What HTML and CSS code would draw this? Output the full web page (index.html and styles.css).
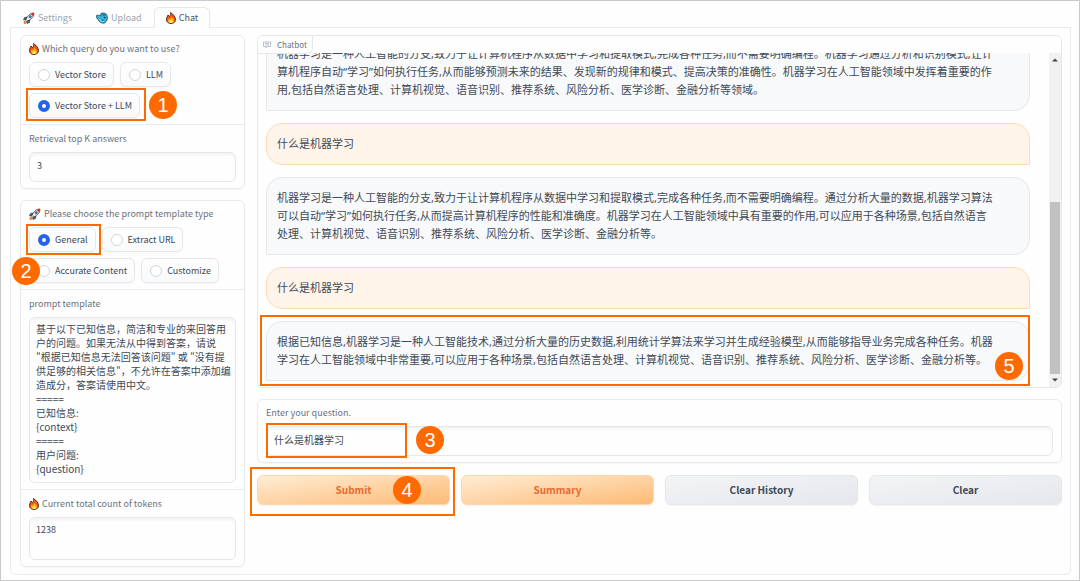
FILE: index.html
```html
<!DOCTYPE html>
<html lang="zh-CN">
<head>
<meta charset="utf-8">
<meta name="viewport" content="width=device-width, initial-scale=1">
<title>Chat</title>
<link rel="stylesheet" href="styles.css">
</head>
<body>
<svg class="defs" aria-hidden="true">
  <symbol id="rocket" viewBox="0 0 24 24">
    <path d="M8 10 3 11 1 16l5-1zM14 16l-1 5-5 2 1-5z" fill="#1c6f9e" stroke="#222" stroke-width="1"/>
    <path d="M5 17c-3 1-3 4-3 6 3 0 5-1 6-3z" fill="#f6a21b" stroke="#a33a12" stroke-width="1"/>
    <path d="M22 2c-7 0-12 4-16 13l3 3C18 14 22 9 22 2z" fill="#e8edf0" stroke="#333" stroke-width="1.4"/>
    <path d="M22 2c-3 0-5 .5-7 1.500l5.500 5.500C21.500 7 22 5 22 2z" fill="#d9292c"/>
    <circle cx="14.500" cy="9.500" r="2.300" fill="#2b8fc0" stroke="#333" stroke-width="1"/>
  </symbol>
  <symbol id="fish" viewBox="0 0 24 24">
    <path d="M1 7c3-1 6-1 8 1l1-5c5-2 10-1 12 4 2 6 0 12-5 15-5 1-10-1-12-6-3-2-4-5-4-9z" fill="#35b5dc" stroke="#17384a" stroke-width="1.500"/>
    <path d="M12 4c3-1 6 0 8 3l-6 2zM11 14c3 0 5 1 5 4-3 1-5-1-5-4z" fill="#1884ad"/>
    <path d="M6 14c2 4 6 6 10 5" stroke="#a5e6f5" stroke-width="2" fill="none"/>
    <circle cx="17.500" cy="11" r="1.600" fill="#14242d"/>
  </symbol>
  <symbol id="fire" viewBox="0 0 20 24">
    <path d="M9 1c6 4 10 9 10 14 0 5-4 8-9 8s-9-3-9-8c0-4 2-6 3-9l3 3c2-2 3-5 2-8z" fill="#ef5b17" stroke="#4a2010" stroke-width="1.800"/>
    <path d="M10 10c3 2 6 5 6 8 0 3-3 4-6 4s-6-1-6-4c0-2 1-4 3-5l1 2c1-1 2-3 2-5z" fill="#fcb51f"/>
    <path d="M10 16c2 1 3 2 3 4s-1 2-3 2-3-1-3-2 1-3 3-4z" fill="#fff05a"/>
  </symbol>
</svg>
<div class="app">
  <nav class="tabs" role="tablist">
    <button class="tab" role="tab"><svg class="emoji"><use href="#rocket"/></svg>Settings</button>
    <button class="tab" role="tab"><svg class="emoji"><use href="#fish"/></svg>Upload</button>
    <button class="tab tab-active" role="tab" aria-selected="true"><svg class="emoji slim"><use href="#fire"/></svg>Chat</button>
  </nav>
  <main class="panel">
    <div class="side">
      <section class="card">
        <div class="block" role="radiogroup" aria-labelledby="query-label">
          <div class="label" id="query-label"><svg class="emoji slim"><use href="#fire"/></svg>Which query do you want to use?</div>
          <div class="pills">
            <label class="pill"><input type="radio" name="query">Vector Store</label>
            <label class="pill"><input type="radio" name="query">LLM</label>
            <label class="pill"><input type="radio" name="query" checked>Vector Store + LLM<span class="mark mark-query"></span><span class="step step-1">1</span></label>
          </div>
        </div>
        <div class="block">
          <label class="label" for="topk">Retrieval top K answers</label>
          <input class="field numeric" id="topk" type="text" value="3">
        </div>
      </section>
      <section class="card">
        <div class="block" role="radiogroup" aria-labelledby="template-label">
          <div class="label" id="template-label"><svg class="emoji"><use href="#rocket"/></svg>Please choose the prompt template type</div>
          <div class="pills">
            <label class="pill"><input type="radio" name="template" checked>General<span class="mark mark-template"></span></label>
            <label class="pill"><input type="radio" name="template">Extract URL</label>
            <label class="pill"><input type="radio" name="template">Accurate Content<span class="step step-2">2</span></label>
            <label class="pill"><input type="radio" name="template">Customize</label>
          </div>
        </div>
        <div class="block">
          <label class="label" for="prompt">prompt template</label>
          <textarea class="field area" id="prompt" rows="11">基于以下已知信息，简洁和专业的来回答用
户的问题。如果无法从中得到答案，请说
"根据已知信息无法回答该问题" 或 "没有提
供足够的相关信息"，不允许在答案中添加编
造成分，答案请使用中文。
=====
已知信息:
{context}
=====
用户问题:
{question}</textarea>
        </div>
        <div class="block">
          <label class="label" for="tokens"><svg class="emoji slim"><use href="#fire"/></svg>Current total count of tokens</label>
          <textarea class="field area numeric tokens" id="tokens" rows="2">1238</textarea>
        </div>
      </section>
    </div>
    <div class="content">
      <section class="chatbot">
        <div class="chat-label"><svg class="chat-icon" viewBox="0 0 16 16"><path d="M1 2h14v9H9l-3 3v-3H1zM4 5h8M4 8h8" fill="none" stroke="currentColor" stroke-width="1.300"/></svg>Chatbot</div>
        <div class="chat-body">
          <div class="messages">
            <div class="message bot">机器学习是一种人工智能的分支,致力于让计算机程序从数据中学习和提取模式,完成各种任务,而不需要明确编程。机器学习通过分析和识别模式,让计<br>算机程序自动“学习”如何执行任务,从而能够预测未来的结果、发现新的规律和模式、提高决策的准确性。机器学习在人工智能领域中发挥着重要的作<br>用,包括自然语言处理、计算机视觉、语音识别、推荐系统、风险分析、医学诊断、金融分析等领域。</div>
            <div class="message user">什么是机器学习</div>
            <div class="message bot">机器学习是一种人工智能的分支,致力于让计算机程序从数据中学习和提取模式,完成各种任务,而不需要明确编程。通过分析大量的数据,机器学习算法<br>可以自动“学习”如何执行任务,从而提高计算机程序的性能和准确度。机器学习在人工智能领域中具有重要的作用,可以应用于各种场景,包括自然语言<br>处理、计算机视觉、语音识别、推荐系统、风险分析、医学诊断、金融分析等。</div>
            <div class="message user">什么是机器学习</div>
            <div class="message bot">根据已知信息,机器学习是一种人工智能技术,通过分析大量的历史数据,利用统计学算法来学习并生成经验模型,从而能够指导业务完成各种任务。机器<br>学习在人工智能领域中非常重要,可以应用于各种场景,包括自然语言处理、计算机视觉、语音识别、推荐系统、风险分析、医学诊断、金融分析等。<span class="mark mark-answer"></span><span class="step step-5">5</span></div>
          </div>
          <div class="scrollbar" aria-hidden="true">
            <svg class="arrow" viewBox="0 0 12 12"><path d="M3 8h6L6 5z" fill="#444"/></svg>
            <div class="track"><div class="thumb"></div></div>
            <svg class="arrow" viewBox="0 0 12 12"><path d="M3 4h6L6 7z" fill="#444"/></svg>
          </div>
        </div>
      </section>
      <section class="card">
        <div class="block">
          <label class="label" for="question">Enter your question.</label>
          <div class="anchor">
            <input class="field" id="question" type="text" value="什么是机器学习">
            <span class="mark mark-question"></span><span class="step step-3">3</span>
          </div>
        </div>
      </section>
      <div class="actions">
        <div class="anchor">
          <button class="btn primary">Submit</button>
          <span class="mark mark-submit"></span><span class="step step-4">4</span>
        </div>
        <button class="btn primary">Summary</button>
        <button class="btn">Clear History</button>
        <button class="btn">Clear</button>
      </div>
    </div>
  </main>
</div>
</body>
</html>
```
FILE: styles.css
```css
* { box-sizing: border-box; }
body {
  margin: 0;
  background: #fefefe;
  color: #414956;
  font-family: "Noto Sans CJK SC", "Noto Sans", sans-serif;
  font-size: 10px;
  line-height: 14px;
}
button, input, textarea { font: inherit; color: inherit; }
.defs { position: absolute; width: 0; height: 0; }
.app {
  display: flex;
  flex-direction: column;
  min-height: 100vh;
  padding: 6px 8px 5px 9px;
  border: 1px solid #c9c9c9;
}
.tabs { display: flex; height: 20px; padding-left: 1px; }
.tab {
  display: flex;
  align-items: center;
  height: 21px;
  padding: 0 11px;
  border: 1px solid transparent;
  border-bottom: 0;
  background: none;
  color: #9ca3af;
  font-size: 9px;
}
.tab-active {
  border-color: #e5e7eb;
  border-radius: 6px 6px 0 0;
  background: #fefefe;
  color: #4b5563;
  z-index: 1;
}
.emoji { flex: none; width: 12px; height: 12px; margin-right: 3px; }
.emoji.slim { width: 10px; }
.panel {
  flex: 1;
  display: grid;
  grid-template-columns: 45fr 161fr;
  gap: 12px;
  padding: 7px 8px 7px 9px;
  border: 1px solid #e9eaec;
  border-radius: 0 0 6px 6px;
}
.side, .content { display: flex; flex-direction: column; gap: 12px; min-width: 0; }
.side { gap: 11px; }
.card { border: 1px solid #e8eaed; border-radius: 6px; box-shadow: 0 1px 2px #0000000a; }
.block { min-width: 0; padding: 6px 8px; }
.block + .block { padding-top: 7px; border-top: 1px solid #e8eaed; }
.label { display: flex; align-items: center; margin-bottom: 6px; color: #6b7280; font-size: 9px; }
.pills { display: flex; flex-wrap: wrap; gap: 6px; }
.pill {
  position: relative;
  display: flex;
  align-items: center;
  gap: 5px;
  height: 25px;
  padding: 0 7px 0 8px;
  border: 1px solid #e5e7eb;
  border-radius: 6px;
  background: linear-gradient(to top, #f9fafb, #fefefe);
  box-shadow: 0 1px 2px #0000000a;
  font-size: 9px;
}
.pill input {
  appearance: none;
  width: 12px;
  height: 12px;
  margin: 0;
  border: 1px solid #d1d5db;
  border-radius: 50%;
  background: #fff;
}
.pill input:checked { border: 4px solid #2563eb; }
.field {
  display: block;
  width: 100%;
  height: 30px;
  margin: 0;
  padding: 0 7px 3px;
  border: 1px solid #e5e7eb;
  border-radius: 6px;
  background: #fefefe;
  box-shadow: inset 0 2px 3px #0000000c;
  outline: 0;
}
.area { height: auto; padding: 4px 3px 6px 6px; resize: none; overflow: hidden; }
.numeric { font-size: 9px; }
.tokens { min-height: 43px; padding-top: 5px; }
.chatbot {
  position: relative;
  height: 353px;
  margin-bottom: -1px;
  padding-top: 17px;
  overflow: hidden;
  border: 1px solid #e5e7eb;
  border-radius: 6px;
}
.chat-label {
  position: absolute;
  top: 0;
  left: 0;
  display: flex;
  align-items: center;
  gap: 6px;
  height: 18px;
  padding: 0 5px 0 5px;
  border: solid #e5e7eb;
  border-width: 0 1px 1px 0;
  border-radius: 0 0 6px 0;
  background: #fefefe;
  color: #6b7280;
  font-size: 8px;
  z-index: 1;
}
.chat-icon { width: 8px; height: 8px; color: #9ca3af; }
.chat-body { display: flex; height: 100%; }
.messages {
  flex: 1;
  display: flex;
  flex-direction: column;
  justify-content: flex-end;
  gap: 12px;
  min-width: 0;
  padding: 0 19px 6px 8px;
  overflow: hidden;
}
.message {
  position: relative;
  flex: none;
  padding: 11px 10px;
  border: 1px solid #e5e7eb;
  border-radius: 16px;
  font-family: "Noto Sans", "Noto Sans CJK SC", sans-serif;
  font-size: 11px;
  line-height: 18px;
}
.bot { border-bottom-left-radius: 0; background: #f8f9fb; }
.user { border-color: #fcdcb2; border-bottom-right-radius: 0; background: #fff4ea; }
.scrollbar { display: flex; flex-direction: column; width: 12px; background: #f1f1f1; }
.arrow { width: 12px; height: 13px; }
.track { flex: 1; display: flex; flex-direction: column; justify-content: flex-end; padding: 0 1px; }
.thumb { height: 56%; background: #c1c1c1; }
.actions { display: grid; grid-template-columns: repeat(4, 1fr); gap: 11px; }
.anchor { position: relative; }
.btn {
  width: 100%;
  height: 30px;
  border: 1px solid #e5e7eb;
  border-radius: 6px;
  background: linear-gradient(to bottom right, #f3f4f6, #e5e7eb);
  box-shadow: 0 1px 2px #0000000d;
  font-size: 10px;
  font-weight: 600;
}
.primary { border-color: #fed7aa; background: linear-gradient(to bottom right, #ffedd5, #fdba74); color: #ea6a32; }
.mark { position: absolute; border: 2px solid #ff6a00; pointer-events: none; z-index: 2; }
.mark-query { inset: -6px -7px -4px -4px; }
.mark-template { inset: -4px -6px -4px -4px; }
.mark-question { left: 0; top: -3px; bottom: -2px; width: 141px; }
.mark-submit { inset: -8px -5px -11px -7px; }
.mark-answer { inset: -7px -1px -6px -7px; }
.step {
  position: absolute;
  width: 28px;
  height: 28px;
  border-radius: 50%;
  background: #ff6a00;
  color: #fff;
  font: 20px/28px "Liberation Sans", Arial, sans-serif;
  text-align: center;
  z-index: 3;
}
.step-1 { right: -38px; top: -3px; }
.step-2 { left: -18px; top: -2px; }
.step-3 { left: 150px; top: 0; }
.step-4 { right: 29px; top: 1px; }
.step-5 { right: 6px; bottom: 0; }
```
